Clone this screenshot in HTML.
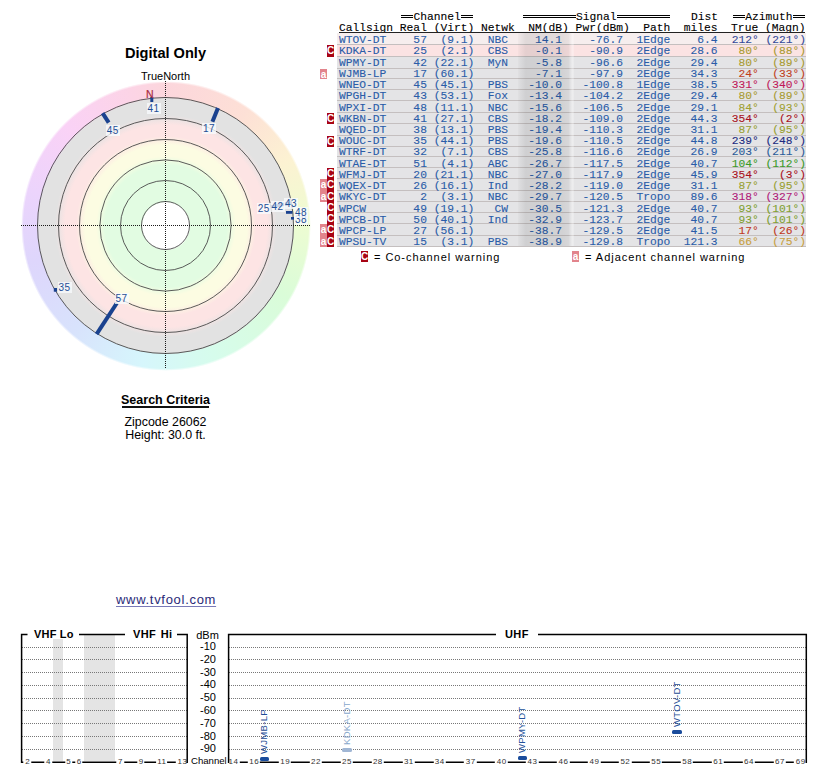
<!DOCTYPE html>
<html><head><meta charset="utf-8">
<style>
html,body{margin:0;padding:0;background:#fff;}
body{width:834px;height:778px;position:relative;overflow:hidden;font-family:"Liberation Sans",sans-serif;color:#000;}
.a{position:absolute;white-space:pre;}
#title{left:0;width:331px;text-align:center;top:44.3px;font-size:14.6px;font-weight:bold;line-height:18px;}
#tn{left:0;width:331px;text-align:center;top:70px;font-size:11px;line-height:12px;}
#wheel{left:20.5px;top:80.5px;width:290px;height:290px;border-radius:50%;
 background:conic-gradient(from 0deg,#fcd6dc,#fde0d6 35deg,#fcf2d2 62deg,#eefcd2 88deg,#dafcd8 120deg,#d6fcec 160deg,#d6f6fc 190deg,#d8e2fc 222deg,#ded6fc 255deg,#ecd4fc 285deg,#fad2f6 315deg,#fcd4e6 345deg,#fcd6dc 360deg);
 -webkit-mask:radial-gradient(circle closest-side,#000 0,#000 142.5px,rgba(0,0,0,0) 145px);}
#bands{left:37.5px;top:97.5px;width:256px;height:256px;border-radius:50%;
 background:radial-gradient(circle closest-side,#fff 0,#fff 23.5px,#e2fce2 24.5px,#e2fce2 61px,#fcfce2 70px,#fcfce2 81px,#fde4e4 90px,#fde4e4 101px,#e2e2e2 111px,#e2e2e2 128px);}
.mono{font-family:"Liberation Mono",monospace;font-size:11.283px;line-height:11px;}
.row{position:absolute;left:337px;width:469px;border-bottom:1px solid #c4bfbf;}
.txt{position:absolute;white-space:pre;color:#2a5ca8;-webkit-text-stroke:0.1px;}
.ic{position:absolute;width:7px;color:#fff;font-size:10px;line-height:11px;text-align:center;font-family:"Liberation Sans",sans-serif;font-weight:bold;overflow:hidden;}
.icC{background:#a80414;}
.ica{background:#e2848c;}
.chl{font-size:8px;line-height:9px;color:#222;background:#fff;transform:translateX(-50%);padding:0 1px 0 1.5px;letter-spacing:0.5px;color:#333;}
.vt{font-size:9.5px;line-height:10px;letter-spacing:0.3px;transform-origin:0 0;transform:rotate(-90deg) translateY(-50%);}
.lbl{position:absolute;font-size:10px;color:#1f4f96;letter-spacing:0.5px;line-height:11px;white-space:pre;padding:0 1px;background:rgba(248,250,253,.8);}
</style></head><body>
<div class="a" id="title">Digital Only</div>
<div class="a" id="tn">TrueNorth</div>
<div class="a" id="wheel"></div>
<div class="a" id="bands"></div>
<svg class="a" style="left:0;top:0" width="331" height="380" viewBox="0 0 331 380">
 <g fill="none" stroke="#484848" stroke-width="0.9">
  <circle cx="165.5" cy="225.5" r="24"/>
  <circle cx="165.5" cy="225.5" r="45"/>
  <circle cx="165.5" cy="225.5" r="65.6"/>
  <circle cx="165.5" cy="225.5" r="86"/>
  <circle cx="165.5" cy="225.5" r="107"/>
  <circle cx="165.5" cy="225.5" r="128"/>
 </g>
 <g stroke="#1a1a1a" stroke-width="1" stroke-dasharray="1 1">
  <line x1="21" y1="225.5" x2="311" y2="225.5"/>
  <line x1="165.5" y1="81" x2="165.5" y2="369"/>
 </g>
 <g stroke="#1a428f" stroke-width="4" stroke-linecap="butt">
  <line x1="96.6" y1="334.2" x2="116.9" y2="303"/>
  <line x1="102.6" y1="113.2" x2="108.7" y2="122.7"/>
  <line x1="218" y1="108" x2="212.4" y2="121.8"/>
  <line x1="291.6" y1="203.1" x2="270.9" y2="206.7" stroke-width="3"/>
  <line x1="291.6" y1="203.1" x2="276.8" y2="205.7" stroke-width="3"/>
  <line x1="291.6" y1="203.1" x2="284.2" y2="204.4" stroke-width="3"/>
 </g>
 <g fill="#1a428f">
  <rect x="150.3" y="97" width="3" height="5"/>
  <rect x="53.8" y="288" width="3.2" height="3.7"/>
  <rect x="286" y="211" width="6.5" height="2.8"/>
  <rect x="291" y="217" width="3" height="2.6"/>
 </g>
 <text x="146" y="97.7" font-family="Liberation Sans" font-size="10.5" fill="#a82c40" stroke="#a82c40" stroke-width="0.2">N</text>
</svg>
<div class="lbl" style="left:146.5px;top:103.3px">41</div>
<div class="lbl" style="left:105.8px;top:125.4px">45</div>
<div class="lbl" style="left:202.0px;top:123.0px">17</div>
<div class="lbl" style="left:114.5px;top:293.0px">57</div>
<div class="lbl" style="left:57.5px;top:282.3px">35</div>
<div class="lbl" style="left:256.8px;top:203.2px">25</div>
<div class="lbl" style="left:270.5px;top:201.0px">42</div>
<div class="lbl" style="left:294.0px;top:214.2px">38</div>
<div class="lbl" style="left:284.0px;top:197.8px">43</div>
<div class="lbl" style="left:294.0px;top:207.2px">48</div>
<div class="mono">
<div class="txt" style="left:413.47px;top:12.00px;color:#000;">Channel</div>
<div class="a" style="left:400.93px;top:15px;width:12.54px;height:1px;border-top:1px solid #000;border-bottom:1px solid #000"></div>
<div class="a" style="left:460.86px;top:15px;width:12.54px;height:1px;border-top:1px solid #000;border-bottom:1px solid #000"></div>
<div class="txt" style="left:575.95px;top:12.00px;color:#000;">Signal</div>
<div class="a" style="left:522.79px;top:15px;width:53.16px;height:1px;border-top:1px solid #000;border-bottom:1px solid #000"></div>
<div class="a" style="left:616.57px;top:15px;width:53.16px;height:1px;border-top:1px solid #000;border-bottom:1px solid #000"></div>
<div class="txt" style="left:691.04px;top:12.00px;color:#000;">Dist</div>
<div class="txt" style="left:745.20px;top:12.00px;color:#000;">Azimuth</div>
<div class="a" style="left:732.66px;top:15px;width:12.54px;height:1px;border-top:1px solid #000;border-bottom:1px solid #000"></div>
<div class="a" style="left:792.59px;top:15px;width:12.54px;height:1px;border-top:1px solid #000;border-bottom:1px solid #000"></div>
<div class="txt" style="left:339.00px;top:23.00px;color:#000;">Callsign Real (Virt) Netwk  NM(dB) Pwr(dBm)  Path  miles  True (Magn)</div>
<div class="a" style="left:339px;top:32px;width:466px;height:1px;background:#222"></div>
<div class="row" style="top:33px;height:11px;background:#f6eeee"></div>
<div class="row" style="top:45px;height:11px;background:#fbe3e3"></div>
<div class="row" style="top:57px;height:11px;background:#e4e4e6"></div>
<div class="row" style="top:69px;height:9px;background:#e4e4e6"></div>
<div class="row" style="top:79px;height:10px;background:#e4e4e6"></div>
<div class="row" style="top:90px;height:10px;background:#e4e4e6"></div>
<div class="row" style="top:101px;height:11px;background:#e4e4e6"></div>
<div class="row" style="top:113px;height:10px;background:#e4e4e6"></div>
<div class="row" style="top:124px;height:11px;background:#e4e4e6"></div>
<div class="row" style="top:136px;height:10px;background:#e4e4e6"></div>
<div class="row" style="top:147px;height:9px;background:#e4e4e6"></div>
<div class="row" style="top:157px;height:10px;background:#e4e4e6"></div>
<div class="row" style="top:168px;height:10px;background:#e4e4e6"></div>
<div class="row" style="top:179px;height:11px;background:#e4e4e6"></div>
<div class="row" style="top:191px;height:10px;background:#e4e4e6"></div>
<div class="row" style="top:202px;height:10px;background:#e4e4e6"></div>
<div class="row" style="top:213px;height:10px;background:#e4e4e6"></div>
<div class="row" style="top:224px;height:11px;background:#e4e4e6"></div>
<div class="row" style="top:236px;height:10px;background:#e4e4e6"></div>
<div class="txt" style="left:339.00px;top:35.20px;color:#2a5ca8;">WTOV-DT    57  (9.1)  NBC    14.1    -76.7  1Edge    6.4  </div>
<div class="txt" style="left:731.66px;top:35.20px;color:#34489a;">212° (221°)</div>
<div class="txt" style="left:339.00px;top:46.42px;color:#2a5ca8;">KDKA-DT    25  (2.1)  CBS    -0.1    -90.9  2Edge   28.6  </div>
<div class="txt" style="left:731.66px;top:46.42px;color:#a89a30;"> 80°  (88°)</div>
<div class="ic icC" style="left:327px;top:45px;height:12px">C</div>
<div class="txt" style="left:339.00px;top:57.64px;color:#2a5ca8;">WPMY-DT    42 (22.1)  MyN    -5.8    -96.6  2Edge   29.4  </div>
<div class="txt" style="left:731.66px;top:57.64px;color:#a89a30;"> 80°  (89°)</div>
<div class="txt" style="left:339.00px;top:68.86px;color:#2a5ca8;">WJMB-LP    17 (60.1)         -7.1    -97.9  2Edge   34.3  </div>
<div class="txt" style="left:731.66px;top:68.86px;color:#c0401c;"> 24°  (33°)</div>
<div class="ic ica" style="left:320px;top:69px;height:10px">a</div>
<div class="txt" style="left:339.00px;top:80.08px;color:#2a5ca8;">WNEO-DT    45 (45.1)  PBS   -10.0   -100.8  1Edge   38.5  </div>
<div class="txt" style="left:731.66px;top:80.08px;color:#c01858;">331° (340°)</div>
<div class="txt" style="left:339.00px;top:91.30px;color:#2a5ca8;">WPGH-DT    43 (53.1)  Fox   -13.4   -104.2  2Edge   29.4  </div>
<div class="txt" style="left:731.66px;top:91.30px;color:#a89a30;"> 80°  (89°)</div>
<div class="txt" style="left:339.00px;top:102.52px;color:#2a5ca8;">WPXI-DT    48 (11.1)  NBC   -15.6   -106.5  2Edge   29.1  </div>
<div class="txt" style="left:731.66px;top:102.52px;color:#a0a030;"> 84°  (93°)</div>
<div class="txt" style="left:339.00px;top:113.74px;color:#2a5ca8;">WKBN-DT    41 (27.1)  CBS   -18.2   -109.0  2Edge   44.3  </div>
<div class="txt" style="left:731.66px;top:113.74px;color:#a81020;">354°   (2°)</div>
<div class="ic icC" style="left:327px;top:113px;height:11px">C</div>
<div class="txt" style="left:339.00px;top:124.96px;color:#2a5ca8;">WQED-DT    38 (13.1)  PBS   -19.4   -110.3  2Edge   31.1  </div>
<div class="txt" style="left:731.66px;top:124.96px;color:#98a030;"> 87°  (95°)</div>
<div class="txt" style="left:339.00px;top:136.18px;color:#2a5ca8;">WOUC-DT    35 (44.1)  PBS   -19.6   -110.5  2Edge   44.8  </div>
<div class="txt" style="left:731.66px;top:136.18px;color:#202a80;">239° (248°)</div>
<div class="ic icC" style="left:327px;top:136px;height:11px">C</div>
<div class="txt" style="left:339.00px;top:147.40px;color:#2a5ca8;">WTRF-DT    32  (7.1)  CBS   -25.8   -116.6  2Edge   26.9  </div>
<div class="txt" style="left:731.66px;top:147.40px;color:#2a5a98;">203° (211°)</div>
<div class="txt" style="left:339.00px;top:158.62px;color:#2a5ca8;">WTAE-DT    51  (4.1)  ABC   -26.7   -117.5  2Edge   40.7  </div>
<div class="txt" style="left:731.66px;top:158.62px;color:#3a9a28;">104° (112°)</div>
<div class="txt" style="left:339.00px;top:169.84px;color:#2a5ca8;">WFMJ-DT    20 (21.1)  NBC   -27.0   -117.9  2Edge   45.9  </div>
<div class="txt" style="left:731.66px;top:169.84px;color:#a81020;">354°   (3°)</div>
<div class="ic icC" style="left:327px;top:168px;height:11px">C</div>
<div class="txt" style="left:339.00px;top:181.06px;color:#2a5ca8;">WQEX-DT    26 (16.1)  Ind   -28.2   -119.0  2Edge   31.1  </div>
<div class="txt" style="left:731.66px;top:181.06px;color:#98a030;"> 87°  (95°)</div>
<div class="ic icC" style="left:327px;top:179px;height:12px">C</div>
<div class="ic ica" style="left:320px;top:179px;height:12px">a</div>
<div class="txt" style="left:339.00px;top:192.28px;color:#2a5ca8;">WKYC-DT     2  (3.1)  NBC   -29.7   -120.5  Tropo   89.6  </div>
<div class="txt" style="left:731.66px;top:192.28px;color:#b01878;">318° (327°)</div>
<div class="ic icC" style="left:327px;top:191px;height:11px">C</div>
<div class="ic ica" style="left:320px;top:191px;height:11px">a</div>
<div class="txt" style="left:339.00px;top:203.50px;color:#2a5ca8;">WPCW       49 (19.1)   CW   -30.5   -121.3  2Edge   40.7  </div>
<div class="txt" style="left:731.66px;top:203.50px;color:#80a030;"> 93° (101°)</div>
<div class="ic icC" style="left:327px;top:202px;height:11px">C</div>
<div class="txt" style="left:339.00px;top:214.72px;color:#2a5ca8;">WPCB-DT    50 (40.1)  Ind   -32.9   -123.7  2Edge   40.7  </div>
<div class="txt" style="left:731.66px;top:214.72px;color:#80a030;"> 93° (101°)</div>
<div class="ic icC" style="left:327px;top:213px;height:11px">C</div>
<div class="txt" style="left:339.00px;top:225.94px;color:#2a5ca8;">WPCP-LP    27 (56.1)        -38.7   -129.5  2Edge   41.5  </div>
<div class="txt" style="left:731.66px;top:225.94px;color:#c0381c;"> 17°  (26°)</div>
<div class="ic icC" style="left:327px;top:224px;height:12px">C</div>
<div class="ic ica" style="left:320px;top:224px;height:12px">a</div>
<div class="txt" style="left:339.00px;top:237.16px;color:#2a5ca8;">WPSU-TV    15  (3.1)  PBS   -38.9   -129.8  Tropo  121.3  </div>
<div class="txt" style="left:731.66px;top:237.16px;color:#c8a040;"> 66°  (75°)</div>
<div class="ic icC" style="left:327px;top:236px;height:11px">C</div>
<div class="ic ica" style="left:320px;top:236px;height:11px">a</div>
<div class="a" style="left:518px;top:33px;width:56px;height:213px;background:linear-gradient(90deg,rgba(0,0,0,.02),rgba(0,0,0,.09) 14%,rgba(0,0,0,.08) 80%,rgba(0,0,0,.06) 90%,rgba(255,255,255,.35) 97%,rgba(255,255,255,.2))"></div>
</div>
<div class="ic icC" style="left:361px;top:251px;height:11px">C</div>
<div class="a" style="left:374px;top:250px;font-size:11px;line-height:14px;letter-spacing:0.95px">= Co-channel warning</div>
<div class="ic ica" style="left:572px;top:251px;height:11px">a</div>
<div class="a" style="left:585px;top:250px;font-size:11px;line-height:14px;letter-spacing:0.98px">= Adjacent channel warning</div>
<div class="a" style="left:0;width:331px;text-align:center;top:392.5px;font-size:12.5px;line-height:14px;font-weight:bold">Search Criteria</div>
<div class="a" style="left:122px;top:406px;width:87px;height:2px;background:#111"></div>
<div class="a" style="left:0;width:331px;text-align:center;top:416px;font-size:12.4px;line-height:13px">Zipcode 26062
Height: 30.0 ft.</div>
<div class="a" style="left:116px;top:591.7px;font-size:13px;line-height:16px;color:#2a2a78;letter-spacing:0.7px;text-decoration:underline;text-underline-offset:2px;text-decoration-color:#7a7ab8">www.tvfool.com</div>
<svg class="a" style="left:0;top:0" width="834" height="778" viewBox="0 0 834 778">
<rect x="53" y="639" width="10" height="122" fill="#e4e4e4"/>
<rect x="84" y="635" width="31" height="126" fill="#e4e4e4"/>
<g stroke="#777" stroke-width="1" stroke-dasharray="1 1"><line x1="22" y1="647.5" x2="187" y2="647.5"/><line x1="229" y1="647.5" x2="806" y2="647.5"/><line x1="22" y1="659.5" x2="187" y2="659.5"/><line x1="229" y1="659.5" x2="806" y2="659.5"/><line x1="22" y1="672.5" x2="187" y2="672.5"/><line x1="229" y1="672.5" x2="806" y2="672.5"/><line x1="22" y1="685.5" x2="187" y2="685.5"/><line x1="229" y1="685.5" x2="806" y2="685.5"/><line x1="22" y1="698.5" x2="187" y2="698.5"/><line x1="229" y1="698.5" x2="806" y2="698.5"/><line x1="22" y1="710.5" x2="187" y2="710.5"/><line x1="229" y1="710.5" x2="806" y2="710.5"/><line x1="22" y1="723.5" x2="187" y2="723.5"/><line x1="229" y1="723.5" x2="806" y2="723.5"/><line x1="22" y1="736.5" x2="187" y2="736.5"/><line x1="229" y1="736.5" x2="806" y2="736.5"/><line x1="22" y1="749.5" x2="187" y2="749.5"/><line x1="229" y1="749.5" x2="806" y2="749.5"/></g>
<g stroke="#000" stroke-width="1.5" fill="none">
<line x1="21" y1="762.3" x2="188" y2="762.3"/>
<line x1="228" y1="762.3" x2="807" y2="762.3"/>
</g>
</svg>
<div class="a" style="left:34px;top:627px;font-size:11px;line-height:14px;font-weight:bold;letter-spacing:0.2px">VHF Lo</div>
<div class="a" style="left:133px;top:627px;font-size:11px;line-height:14px;font-weight:bold;letter-spacing:0.4px;word-spacing:1px">VHF Hi</div>
<div class="a" style="left:505px;top:627px;font-size:11px;line-height:14px;font-weight:bold;letter-spacing:0.4px">UHF</div>
<div class="a" style="left:192.5px;top:628.5px;width:30px;text-align:center;font-size:11px;line-height:13px">dBm</div>
<div class="a" style="left:180px;top:640.2px;width:36px;text-align:right;font-size:11px;line-height:13px">-10</div>
<div class="a" style="left:180px;top:652.9px;width:36px;text-align:right;font-size:11px;line-height:13px">-20</div>
<div class="a" style="left:180px;top:665.7px;width:36px;text-align:right;font-size:11px;line-height:13px">-30</div>
<div class="a" style="left:180px;top:678.4px;width:36px;text-align:right;font-size:11px;line-height:13px">-40</div>
<div class="a" style="left:180px;top:691.2px;width:36px;text-align:right;font-size:11px;line-height:13px">-50</div>
<div class="a" style="left:180px;top:704.0px;width:36px;text-align:right;font-size:11px;line-height:13px">-60</div>
<div class="a" style="left:180px;top:716.7px;width:36px;text-align:right;font-size:11px;line-height:13px">-70</div>
<div class="a" style="left:180px;top:729.5px;width:36px;text-align:right;font-size:11px;line-height:13px">-80</div>
<div class="a" style="left:180px;top:742.2px;width:36px;text-align:right;font-size:11px;line-height:13px">-90</div>
<div class="a" style="left:191px;top:753.5px;font-size:9.6px;line-height:13px">Channel</div>
<div class="a chl" style="left:27.4px;top:757px">2</div>
<div class="a chl" style="left:48.2px;top:757px">4</div>
<div class="a chl" style="left:68.5px;top:757px">5</div>
<div class="a chl" style="left:79.0px;top:757px">6</div>
<div class="a chl" style="left:120.3px;top:757px">7</div>
<div class="a chl" style="left:141.0px;top:757px">9</div>
<div class="a chl" style="left:161.6px;top:757px">11</div>
<div class="a chl" style="left:182.2px;top:757px">13</div>
<div class="a chl" style="left:233.3px;top:757px">14</div>
<div class="a chl" style="left:253.9px;top:757px">16</div>
<div class="a chl" style="left:284.9px;top:757px">19</div>
<div class="a chl" style="left:315.8px;top:757px">22</div>
<div class="a chl" style="left:346.7px;top:757px">25</div>
<div class="a chl" style="left:377.6px;top:757px">28</div>
<div class="a chl" style="left:408.6px;top:757px">31</div>
<div class="a chl" style="left:439.5px;top:757px">34</div>
<div class="a chl" style="left:470.4px;top:757px">37</div>
<div class="a chl" style="left:501.4px;top:757px">40</div>
<div class="a chl" style="left:532.3px;top:757px">43</div>
<div class="a chl" style="left:563.2px;top:757px">46</div>
<div class="a chl" style="left:594.2px;top:757px">49</div>
<div class="a chl" style="left:625.1px;top:757px">52</div>
<div class="a chl" style="left:656.0px;top:757px">55</div>
<div class="a chl" style="left:686.9px;top:757px">58</div>
<div class="a chl" style="left:717.9px;top:757px">61</div>
<div class="a chl" style="left:748.8px;top:757px">64</div>
<div class="a chl" style="left:779.7px;top:757px">67</div>
<div class="a chl" style="left:800.4px;top:757px">69</div>
<div class="a" style="left:259.7px;top:757.3px;width:9.5px;height:4px;border-radius:1.5px;background:#1a4c9c"></div>
<div class="a vt" style="left:264.2px;top:754.3px;color:#1e4c94">WJMB-LP</div>
<div class="a" style="left:342.2px;top:748.4px;width:9.5px;height:4px;border-radius:1.5px;background:#a0b6d4"></div>
<div class="a vt" style="left:346.7px;top:745.4px;color:#88a8cc">KDKA-DT</div>
<div class="a" style="left:517.5px;top:755.7px;width:9.5px;height:4px;border-radius:1.5px;background:#1a4c9c"></div>
<div class="a vt" style="left:522.0px;top:752.7px;color:#24529a">WPMY-DT</div>
<div class="a" style="left:672.1px;top:730.3px;width:9.5px;height:4px;border-radius:1.5px;background:#1a4c9c"></div>
<div class="a vt" style="left:676.6px;top:727.3px;color:#1e4c94">WTOV-DT</div>
<svg class="a" style="left:0;top:0" width="834" height="778" viewBox="0 0 834 778"><g stroke="#000" stroke-width="1.5" fill="none"><polyline points="27.5,634.4 21.6,634.4 21.6,763"/><line x1="79" y1="634.4" x2="125" y2="634.4"/><polyline points="177,634.4 187.2,634.4 187.2,763"/><polyline points="496,634.4 228.6,634.4 228.6,763"/><polyline points="538,634.4 806.3,634.4 806.3,763"/></g></svg>
</body></html>
